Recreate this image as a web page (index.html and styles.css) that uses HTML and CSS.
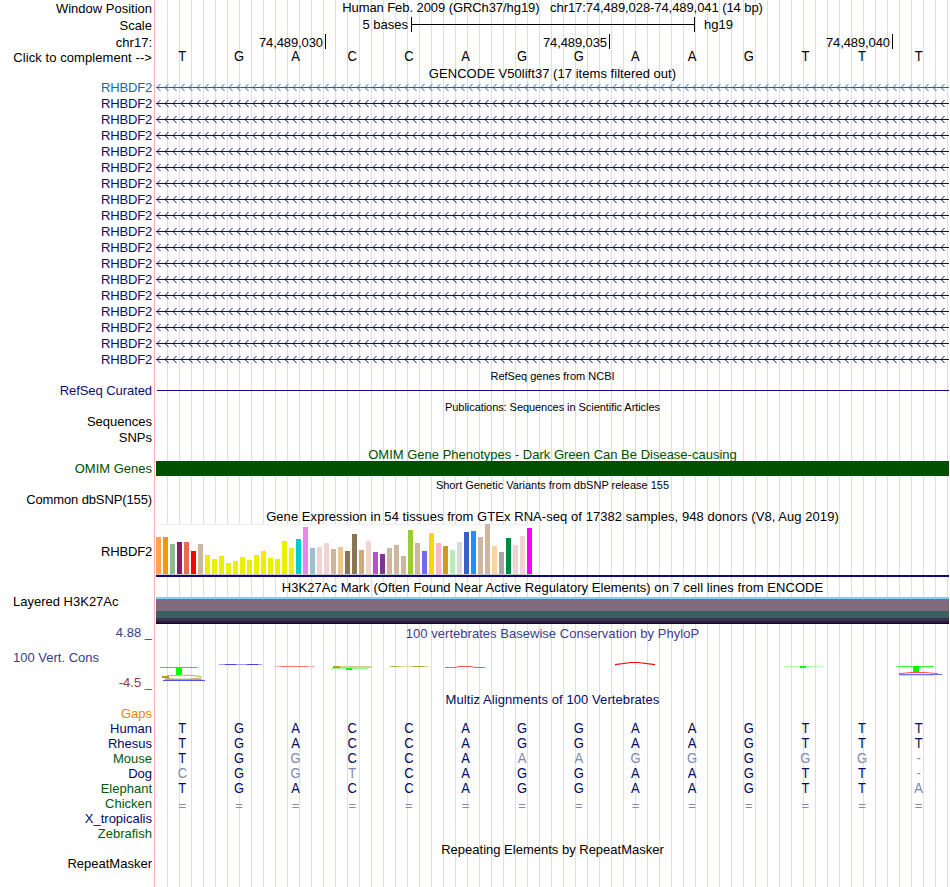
FILE: index.html
```html
<!DOCTYPE html>
<html lang="en">
<head>
<meta charset="utf-8">
<title>Genome Browser chr17:74,489,028-74,489,041</title>
<link rel="stylesheet" href="styles.css">
</head>
<body>
<main class="browser">
  <div class="row h17"><div class="label">Window Position</div><div class="title up t-pos">Human Feb. 2009 (GRCh37/hg19) &nbsp; chr17:74,489,028-74,489,041 (14 bp)</div></div>
  <div class="row h17"><div class="label">Scale</div><div class="scale"><span class="scale-text">5 bases</span><span class="ruler"></span><span class="assembly">hg19</span></div></div>
  <div class="row h16"><div class="label">chr17:</div><div class="ticks"><span class="tick tick-a">74,489,030</span><span class="tick tick-b">74,489,035</span><span class="tick tick-c">74,489,040</span></div></div>
  <div class="row h15"><div class="label t-click">Click to complement --&gt;</div><div class="bases black" data-seq="TGACCAGGAAGTTT"></div></div>
  <div class="row h15"><div></div><div class="title nudge t-gencode">GENCODE V50lift37 (17 items filtered out)</div></div>
  <div id="genes"></div>
  <div class="row h16"><div></div><div class="title small">RefSeq genes from NCBI</div></div>
  <div class="row h14"><div class="label up navy t-curated">RefSeq Curated</div><div class="thin-line"></div></div>
  <div class="row h16"><div></div><div class="title small down t-pub">Publications: Sequences in Scientific Articles</div></div>
  <div class="row h16"><div class="label up">Sequences</div></div>
  <div class="row h16"><div class="label up">SNPs</div></div>
  <div class="row h15"><div></div><div class="title nudge over green">OMIM Gene Phenotypes - Dark Green Can Be Disease-causing</div></div>
  <div class="row h15"><div class="label green">OMIM Genes</div><div class="omim-bar"></div></div>
  <div class="row h17"><div></div><div class="title small down">Short Genetic Variants from dbSNP release 155</div></div>
  <div class="row h15"><div class="label up t-common">Common dbSNP(155)</div></div>
  <div class="row h16"><div></div><div class="title t-gtex">Gene Expression in 54 tissues from GTEx RNA-seq of 17382 samples, 948 donors (V8, Aug 2019)</div></div>
  <div class="row h54"><div class="label gene-name">RHBDF2</div><div class="gtex"><div class="bars" id="bars"></div><div class="gene-model"></div></div></div>
  <div class="row h19"><div></div><div class="title t-h3k">H3K27Ac Mark (Often Found Near Active Regulatory Elements) on 7 cell lines from ENCODE</div></div>
  <div class="row h27"><div class="label left h3k-label">Layered H3K27Ac</div><div class="h3k"></div></div>
  <div class="row h68">
    <div class="cons-labels"><span class="violet">4.88 _</span><span class="violet cons-name">100 Vert. Cons</span><span class="maroon">-4.5 _</span></div>
    <div class="cons">
      <div class="title violet t-phylop">100 vertebrates Basewise Conservation by PhyloP</div>
      <svg class="logo" viewBox="156 644 794 48" width="794" height="48" fill="none">
        <path d="M160 667.5H198" stroke="#00ff00"/><path d="M176 667h6v8h-6z" fill="#00ff00"/>
        <ellipse cx="182.500" cy="677.200" rx="19" ry="2" stroke="#b4b440"/>
        <path d="M162 677h7" stroke="#a0a018" stroke-width="2"/>
        <path d="M165 679.500H202" stroke="#ff8080"/><path d="M163 680.500H205" stroke="#5050ff"/>
        <path d="M219 664.500H262" stroke="#9a9aff"/><path d="M225 664.500H236M247 664.500H258" stroke="#4444ee"/>
        <path d="M275 666.500H315" stroke="#ffb0b0"/><path d="M281 666.500H308" stroke="#ff7070"/>
        <path d="M333 667H372" stroke="#d8d090" stroke-width="2"/><path d="M333 667h7" stroke="#a5a520" stroke-width="2"/><path d="M331 668.500H368" stroke="#90ff90"/><path d="M346 668h6v2h-6z" fill="#00ff00"/>
        <path d="M390 666.500H429" stroke="#d8d890"/><path d="M391 666.500H398M413 666.500H424" stroke="#aaaa30"/>
        <path d="M445 667.500H455L459 666.500H471L475 667.500H485" stroke="#ff5555"/>
        <path d="M615 664.700L631 662.500H638L655 664.700" stroke="#ff0000" stroke-width="1.200"/>
        <path d="M784 666.500H822" stroke="#b0ffb0"/><path d="M800 666h6v2h-6z" fill="#00ff00"/>
        <path d="M897 666.500H934" stroke="#30ff30"/><path d="M913 666h6v6h-6z" fill="#00ff00"/>
        <path d="M899 675.500H934" stroke="#dddda0"/><path d="M899 674.500H942" stroke="#7070ff"/><path d="M899 673.700L911 672.500H925L938 673.700" stroke="#ff5050"/>
      </svg>
    </div>
  </div>
  <div class="row h14"><div></div><div class="title ink t-multiz">Multiz Alignments of 100 Vertebrates</div></div>
  <div class="row h15"><div class="label orange">Gaps</div></div>
  <div class="row h15"><div class="label ink">Human</div><div class="bases" data-seq="TGACCAGGAAGTTT"></div></div>
  <div class="row h15"><div class="label ink">Rhesus</div><div class="bases" data-seq="TGACCAGGAAGTTT"></div></div>
  <div class="row h15"><div class="label forest">Mouse</div><div class="bases" data-seq="TGgCCAaaggGgg-"></div></div>
  <div class="row h15"><div class="label ink">Dog</div><div class="bases" data-seq="cGgtCAGGAAGTT-"></div></div>
  <div class="row h15"><div class="label forest">Elephant</div><div class="bases" data-seq="TGACCAGGAAGTTa"></div></div>
  <div class="row h15"><div class="label forest">Chicken</div><div class="bases gap-row" data-seq="=============="></div></div>
  <div class="row h15"><div class="label ink">X_tropicalis</div></div>
  <div class="row h15"><div class="label forest">Zebrafish</div></div>
  <div class="row h16"><div></div><div class="title">Repeating Elements by RepeatMasker</div></div>
  <div class="row h15"><div class="label up">RepeatMasker</div></div>
</main>
<script src="tracks.js"></script>
</body>
</html>
```
FILE: styles.css
```css
body { margin: 0; background: #fff; color: #000; font: 13px/15px "Liberation Sans", Arial, sans-serif; overflow: hidden; }
.browser {
  width: 949px; height: 887px;
  background:
    linear-gradient(#ffb0b0, #ffb0b0) 154px 0 / 1px 100% no-repeat,
    repeating-linear-gradient(to right, #dcdcf8 0 1px, transparent 1px 12px) 167px 0 / 782px 100% no-repeat;
}
.row { display: grid; grid-template-columns: 152px 793px; column-gap: 4px; }
.h14 { height: 14px; } .h15 { height: 15px; } .h16 { height: 16px; } .h17 { height: 17px; }
.h19 { height: 19px; } .h27 { height: 27px; } .h54 { height: 54px; } .h68 { height: 68px; }
.label { text-align: right; align-self: center; white-space: nowrap; }
.left { text-align: left; padding-left: 13px; }
.title { text-align: center; align-self: center; white-space: nowrap; }
.small { font-size: 11px; }
.up { margin-top: -2px; }
.down { margin-top: 2px; }
.nudge { margin-top: 1px; }
.over { position: relative; z-index: 1; }
.navy { color: #0c0c78; } .blue { color: #0c6caf; } .green { color: #005000; }
.ink { color: #000a64; } .forest { color: #005a0a; } .orange { color: #e68a00; }
.violet { color: #3c3c8c; } .maroon { color: #8c3c3c; }

.t-pos { letter-spacing: -0.075px; }
.t-click { letter-spacing: 0.08px; }
.t-gencode { letter-spacing: 0.04px; }
.t-curated { letter-spacing: -0.07px; }
.t-pub { letter-spacing: -0.06px; }
.t-common { letter-spacing: -0.12px; }
.t-gtex { letter-spacing: 0.06px; }
.t-h3k { letter-spacing: 0.045px; }
.t-phylop { letter-spacing: 0.03px; }
.t-multiz { letter-spacing: 0.08px; }
.gene-name { letter-spacing: -0.17px; }

.scale { display: flex; }
.scale-text { width: 252px; text-align: right; padding-right: 3px; }
.ruler { width: 282px; height: 15px; border: solid #000; border-width: 0 1px; background: linear-gradient(#000, #000) 0 7px / 100% 1px no-repeat; }
.assembly { padding-left: 9px; }
.ticks { display: flex; }
.tick { box-sizing: border-box; height: 15px; border-right: 1px solid #000; padding-right: 2px; text-align: right; line-height: 18px; letter-spacing: -0.1px; }
.tick-a { width: 170px; } .tick-b { width: 284px; } .tick-c { width: 283px; }

.bases { display: grid; grid-template-columns: repeat(14, 56.650px); margin-left: -2px; text-align: center; color: #000a64; align-self: center; transform: scaleY(1.07); }
.bases.black { color: #000; margin-top: -2px; }
.bases.gap-row { margin: 2px 0 -2px -2px; transform: none; }
.bases .faint { color: #8088b4; }

.arrows { display: block; }
.thin-line { height: 1px; margin: 6px 0 0 1px; background: #0c0c78; }
.omim-bar { background: #005000; }
.gtex { display: flex; flex-direction: column; }
.bars { box-sizing: border-box; display: flex; align-items: flex-end; gap: 2px; width: 377px; height: 51px; background: #fff; border-bottom: 1px solid #ccc; box-shadow: inset 0 1px #f0f0f0; }
.bar { width: 5px; }
.gene-model { height: 2px; background: #0c0c78; }
.h3k { background: linear-gradient(#82cfff 0 2px, #816a7e 2px 14px, #3c6062 14px 21px, #3c2f55 21px 24px, #2d1840 24px 26px, #180820 26px); }
.h3k-label { margin-top: -19px; }
.cons-labels { display: flex; flex-direction: column; text-align: right; padding-top: 1px; }
.cons-name { text-align: left; padding: 10px 0 10px 13px; }
.cons { display: flex; flex-direction: column; }
.cons .title { align-self: stretch; height: 18px; padding-top: 2px; }
.logo { display: block; }
```
FILE: tracks.js
```js
const genes = document.getElementById('genes');
for (let i = 0; i < 18; i++) {
  const cls = i === 0 ? 'blue' : 'navy';
  let wings = '';
  for (let x = 157; x < 949; x += 8) wings += `M${x + 3.5} 4L${x} 7.5L${x + 3.5} 11`;
  genes.insertAdjacentHTML('beforeend',
    `<div class="row h16"><div class="label up gene-name ${cls}">RHBDF2</div>` +
    `<svg class="arrows ${cls}" viewBox="156 0 793 16" width="793" height="16" fill="none" stroke="currentColor"><path d="M156 7.5H949"/><path d="${wings}"/></svg></div>`);
}

document.querySelectorAll('.bases').forEach(el => {
  for (const c of el.dataset.seq) {
    const cell = document.createElement('span');
    cell.textContent = c.toUpperCase();
    if (!/[A-Z]/.test(c)) cell.className = 'faint';
    el.append(cell);
  }
});

const yellow = '#eeee00', tan = '#cdb79e', rose = '#eed5d2';
const tissues = [
  [37, '#ffa54f'], [37, '#ee9a00'], [30, '#8fbc8f'], [32, '#8b1c62'], [32, '#ee6a50'], [23, '#ff0000'], [30, tan],
  [19, yellow], [15, yellow], [18, yellow], [11, yellow], [13, yellow], [17, yellow], [14, yellow], [19, yellow],
  [23, yellow], [16, yellow], [15, yellow], [33, yellow], [26, yellow], [35, '#00cdcd'], [47, '#ee82ee'],
  [26, '#9ac0cd'], [27, rose], [31, rose], [25, tan], [27, '#eec591'], [23, '#8b7355'], [40, '#8b7355'],
  [24, '#cdaa7d'], [33, rose], [22, '#b452cd'], [20, '#7a378b'], [26, tan], [29, tan], [18, tan], [44, '#9acd32'],
  [31, tan], [23, '#7a67ee'], [41, '#ffd700'], [31, '#ffb6c1'], [28, '#cd9b1d'], [24, '#b4eeb4'], [32, '#d9d9d9'],
  [42, '#3a5fcd'], [43, '#1e90ff'], [37, tan], [50, tan], [28, '#ffd39b'], [22, '#a6a6a6'], [36, '#008b45'],
  [29, rose], [38, rose], [46, '#ff00ff']
];
document.getElementById('bars').innerHTML =
  tissues.map(([h, c]) => `<span class="bar" style="height:${h}px;background:${c}"></span>`).join('');
```
